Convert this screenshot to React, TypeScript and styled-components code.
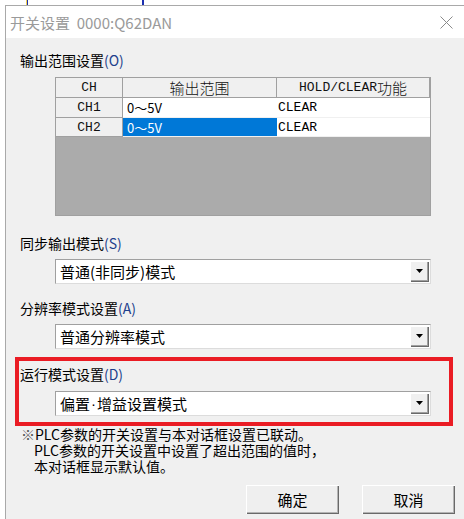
import React from "react";
import styled, { createGlobalStyle } from "styled-components";

const Global = createGlobalStyle`
  html, body { margin: 0; padding: 0; background: #fff; }
  body { font-family: "Noto Sans CJK SC", "Noto Sans", sans-serif; color: #000; }
`;

const Screen = styled.div`
  width: 464px;
  height: 519px;
  display: flex;
  flex-direction: column;
  overflow: hidden;
  background: #fff;
`;

const Backdrop = styled.div`
  flex: none;
  height: 5px;
  background: linear-gradient(
    to right,
    #fff 0, #fff 26px,
    #f2d24a 26px, #f2d24a 27px,
    #1c2fb0 27px, #1c2fb0 28px,
    #fff 28px, #fff 142px,
    #1c2fb0 142px, #1c2fb0 144px,
    #fff 144px
  );
`;

const Dialog = styled.div`
  flex: 1;
  margin-left: 5px;
  border-left: 1px solid #a9a9a9;
  border-top: 1px solid #a9a9a9;
  display: flex;
  flex-direction: column;
  min-height: 0;
`;

const TitleBar = styled.div`
  flex: none;
  height: 32px;
  background: #fff;
  display: flex;
  align-items: center;
  justify-content: space-between;
  padding: 0 11px 0 4px;
`;

const TitleText = styled.span`
  font-size: 15px;
  color: #9a9a9a;
  white-space: pre;
`;

const CloseIcon = styled.svg`
  width: 13px;
  height: 13px;
  display: block;
`;

const Body = styled.div`
  flex: 1;
  background: #f0f0f0;
  display: flex;
  flex-direction: column;
  padding-top: 13px;
`;

const Label = styled.div<{ $mt?: number; $ml?: number }>`
  font-size: 14px;
  line-height: 18px;
  height: 18px;
  margin-top: ${(p) => p.$mt ?? 0}px;
  margin-left: ${(p) => p.$ml ?? 14}px;
  white-space: nowrap;
`;

const Mnemonic = styled.span`
  color: #1d3f8c;
`;

const TableFrame = styled.div`
  margin: 8px 0 0 49px;
  width: 376px;
  height: 139px;
  box-sizing: border-box;
  border: 1px solid #a0a0a0;
  background: #ababab;
  display: flex;
  flex-direction: column;
`;

const Row = styled.div<{ $h: number }>`
  display: grid;
  grid-template-columns: 67px 154px 153px;
  height: ${(p) => p.$h}px;
`;

const HeadCell = styled.div`
  background: #f0f0f0;
  border-right: 1px solid #a0a0a0;
  border-bottom: 1px solid #a0a0a0;
  display: flex;
  align-items: center;
  justify-content: center;
  font-family: "Liberation Mono", monospace;
  font-size: 13px;
  color: #111;
  overflow: hidden;
  white-space: nowrap;
`;

const Cjk = styled.span`
  font-family: "Noto Sans CJK SC", sans-serif;
  font-size: 15px;
  font-weight: 300;
`;

const DataCell = styled.div<{ $selected?: boolean; $mono?: boolean; $pl: number }>`
  background: ${(p) => (p.$selected ? "#0078d7" : "#fff")};
  color: ${(p) => (p.$selected ? "#fff" : "#000")};
  border-bottom: 1px solid #f0f0f0;
  display: flex;
  align-items: center;
  padding-left: ${(p) => p.$pl}px;
  font-family: ${(p) =>
    p.$mono ? `"Liberation Mono", monospace` : `"Noto Sans CJK SC", sans-serif`};
  font-size: 13px;
  white-space: nowrap;
  overflow: hidden;
`;

const Combo = styled.div<{ $mt: number; $ml?: number }>`
  margin-top: ${(p) => p.$mt}px;
  margin-left: ${(p) => p.$ml ?? 49}px;
  width: 376px;
  height: 25px;
  box-sizing: border-box;
  border: 1px solid;
  border-color: #a0a0a0 #dcdcdc #dcdcdc #a0a0a0;
  background: #fff;
  display: flex;
  align-items: stretch;
`;

const ComboText = styled.div`
  flex: 1;
  display: flex;
  align-items: center;
  padding-left: 4px;
  font-size: 15px;
  white-space: nowrap;
`;

const Dot = styled.span`
  font-family: "Liberation Sans", sans-serif;
  margin: 0 1px;
`;

const DropButton = styled.div`
  width: 19px;
  margin: 1px;
  background: #f0f0f0;
  box-shadow: inset 1px 1px 0 #fff, inset -1px -1px 0 #696969, inset -2px -2px 0 #a0a0a0;
  display: flex;
  align-items: center;
  justify-content: center;
`;

const Highlight = styled.div`
  margin: 8px 0 0 9px;
  width: 438px;
  box-sizing: border-box;
  border: 4px solid #ea1c24;
  padding: 4px 0 6px 0;
  display: flex;
  flex-direction: column;
`;

const Notes = styled.div`
  margin: 0 0 0 15px;
  font-size: 14px;
  line-height: 16px;
  white-space: nowrap;
`;

const NoteLine = styled.div<{ $indent?: boolean }>`
  padding-left: ${(p) => (p.$indent ? 13 : 0)}px;
`;

const Mark = styled.span`
  color: #555;
`;

const Buttons = styled.div`
  margin-top: 11px;
  display: flex;
  justify-content: flex-end;
  gap: 23px;
  padding-right: 9px;
`;

const Button = styled.button`
  width: 93px;
  height: 29px;
  box-sizing: border-box;
  border: none;
  padding: 0;
  background: #efefef;
  box-shadow: inset 1px 1px 0 #fff, inset -1px -1px 0 #696969, inset -2px -2px 0 #b4b4b4;
  font-family: "Noto Sans CJK SC", sans-serif;
  font-size: 15px;
  color: #000;
`;

const Arrow = () => (
  <svg width="8" height="5" viewBox="0 0 8 5">
    <path d="M0 0 H7 L3.5 4 Z" fill="#000" />
  </svg>
);

const ComboBox = ({ children, mt, ml }: { children: React.ReactNode; mt: number; ml?: number }) => (
  <Combo $mt={mt} $ml={ml}>
    <ComboText>{children}</ComboText>
    <DropButton>
      <Arrow />
    </DropButton>
  </Combo>
);

export default function App() {
  return (
    <Screen>
      <Global />
      <Backdrop />
      <Dialog>
        <TitleBar>
          <TitleText>{"开关设置  0000:Q62DAN"}</TitleText>
          <CloseIcon viewBox="0 0 13 13">
            <path d="M0.5 0.5 L12.5 12.5 M12.5 0.5 L0.5 12.5" stroke="#8a8a8a" strokeWidth="1" fill="none" />
          </CloseIcon>
        </TitleBar>
        <Body>
          <Label>
            输出范围设置<Mnemonic>(O)</Mnemonic>
          </Label>
          <TableFrame>
            <Row $h={20}>
              <HeadCell>CH</HeadCell>
              <HeadCell>
                <Cjk>输出范围</Cjk>
              </HeadCell>
              <HeadCell>
                HOLD/CLEAR<Cjk>功能</Cjk>
              </HeadCell>
            </Row>
            <Row $h={20}>
              <HeadCell>CH1</HeadCell>
              <DataCell $pl={4}>0～5V</DataCell>
              <DataCell $pl={1} $mono>CLEAR</DataCell>
            </Row>
            <Row $h={19}>
              <HeadCell>CH2</HeadCell>
              <DataCell $pl={4} $selected>0～5V</DataCell>
              <DataCell $pl={1} $mono>CLEAR</DataCell>
            </Row>
          </TableFrame>

          <Label $mt={18}>
            同步输出模式<Mnemonic>(S)</Mnemonic>
          </Label>
          <ComboBox mt={7}>普通(非同步)模式</ComboBox>

          <Label $mt={15}>
            分辨率模式设置<Mnemonic>(A)</Mnemonic>
          </Label>
          <ComboBox mt={7}>普通分辨率模式</ComboBox>

          <Highlight>
            <Label $ml={1}>
              运行模式设置<Mnemonic>(D)</Mnemonic>
            </Label>
            <ComboBox mt={8} ml={36}>
              偏置<Dot>·</Dot>增益设置模式
            </ComboBox>
          </Highlight>

          <Notes>
            <NoteLine>
              <Mark>※</Mark>PLC参数的开关设置与本对话框设置已联动。
            </NoteLine>
            <NoteLine $indent>PLC参数的开关设置中设置了超出范围的值时，</NoteLine>
            <NoteLine $indent>本对话框显示默认值。</NoteLine>
          </Notes>

          <Buttons>
            <Button>确定</Button>
            <Button>取消</Button>
          </Buttons>
        </Body>
      </Dialog>
    </Screen>
  );
}
